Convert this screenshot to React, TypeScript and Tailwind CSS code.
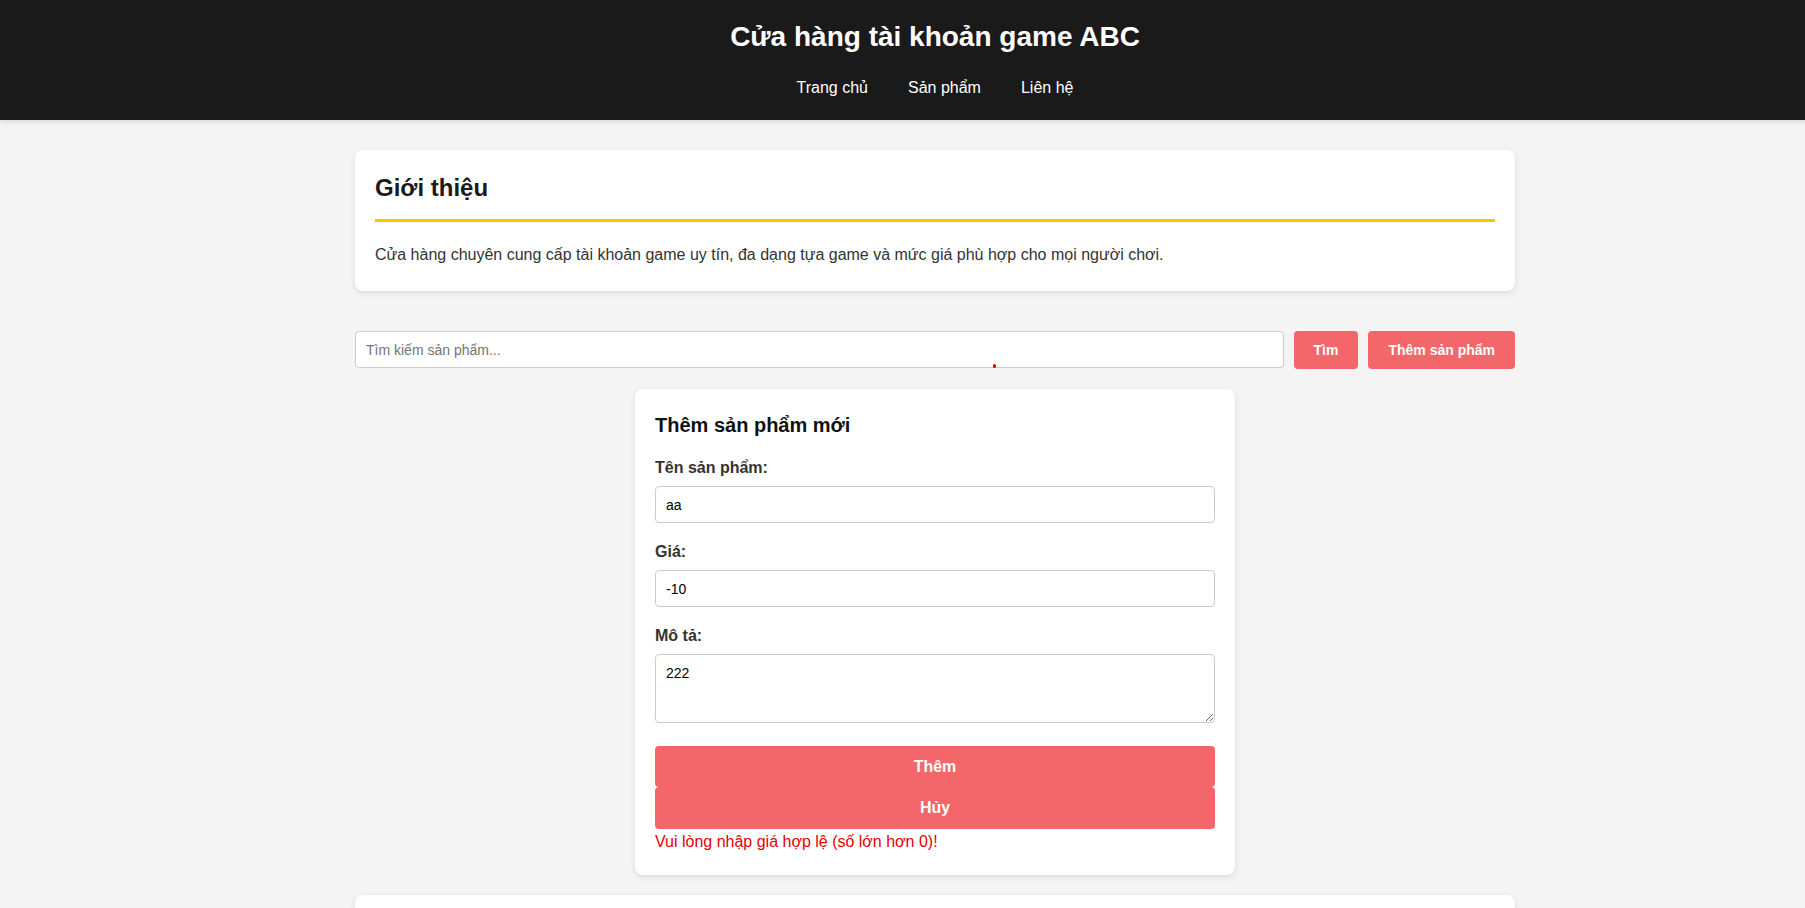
const card = "rounded-lg bg-white shadow-[0_2px_6px_rgba(0,0,0,0.1)]";
const field =
  "block w-full rounded-[4px] border border-[#ccc] bg-white px-[10px] text-sm text-black outline-none placeholder:text-[#757575]";
const redBtn = "rounded-[4px] bg-[#f3676a] font-bold text-white";

function Group({ label, children }: { label: string; children: React.ReactNode }) {
  return (
    <div className="mb-[19px]">
      <label className="mb-[9px] block text-base font-bold leading-[19px] text-[#333]">{label}</label>
      {children}
    </div>
  );
}

export default function App() {
  return (
    <div className="min-h-screen overflow-hidden bg-[#f4f4f4] font-['Liberation_Sans',Arial,sans-serif] text-[#333]">
      <div className="w-[1870px]">
        <header className="h-[120px] bg-[#1a1a1a] pt-[21px] text-center text-white shadow-[0_2px_5px_rgba(0,0,0,0.1)]">
          <h1 className="text-[28px] font-bold leading-[32px]">Cửa hàng tài khoản game ABC</h1>
          <nav className="mt-[26px] flex justify-center gap-10 text-base leading-[18px]">
            <a href="#">Trang chủ</a>
            <a href="#">Sản phẩm</a>
            <a href="#">Liên hệ</a>
          </nav>
        </header>

        <main className="mx-auto max-w-[1200px] px-5 pt-[30px]">
          <section className={`${card} px-5 pt-6 pb-[27px]`}>
            <h2 className="border-b-[3px] border-[#f7c600] pb-[17px] text-2xl font-bold leading-[28px] text-[#1a1a1a]">
              Giới thiệu
            </h2>
            <p className="mt-6 text-base leading-[18px]">
              Cửa hàng chuyên cung cấp tài khoản game uy tín, đa dạng tựa game và mức giá phù hợp cho mọi người chơi.
            </p>
          </section>

          <div className="relative mt-10 flex items-start gap-[10px]">
            <input className={`${field} h-[37px] flex-1`} placeholder="Tìm kiếm sản phẩm..." />
            <button className={`${redBtn} h-[38px] px-5 text-sm`}>Tìm</button>
            <button className={`${redBtn} h-[38px] px-5 text-sm`}>Thêm sản phẩm</button>
            <span className="absolute left-[638px] top-[33px] h-1 w-[3px] rounded-full bg-[#e00000]" />
          </div>

          <div className={`${card} mx-auto mt-5 w-[600px] px-5 pt-[25px] pb-6`}>
            <h3 className="mb-[21px] text-xl font-bold leading-[23px] text-[#111]">Thêm sản phẩm mới</h3>
            <Group label="Tên sản phẩm:">
              <input className={`${field} h-[37px]`} defaultValue="aa" />
            </Group>
            <Group label="Giá:">
              <input className={`${field} h-[37px]`} defaultValue="-10" />
            </Group>
            <Group label="Mô tả:">
              <textarea className={`${field} h-[69px] py-[10px] leading-[16px]`} defaultValue="222" />
            </Group>
            <div className="mt-[23px]">
              <button className={`${redBtn} block h-[41px] w-full text-base`}>Thêm</button>
              <button className={`${redBtn} block h-[42px] w-full text-base`}>Hủy</button>
            </div>
            <p className="mt-1 text-base leading-[18px] text-[#e60000]">Vui lòng nhập giá hợp lệ (số lớn hơn 0)!</p>
          </div>

          <section className={`${card} mt-5 h-[300px]`} />
        </main>
      </div>
    </div>
  );
}
